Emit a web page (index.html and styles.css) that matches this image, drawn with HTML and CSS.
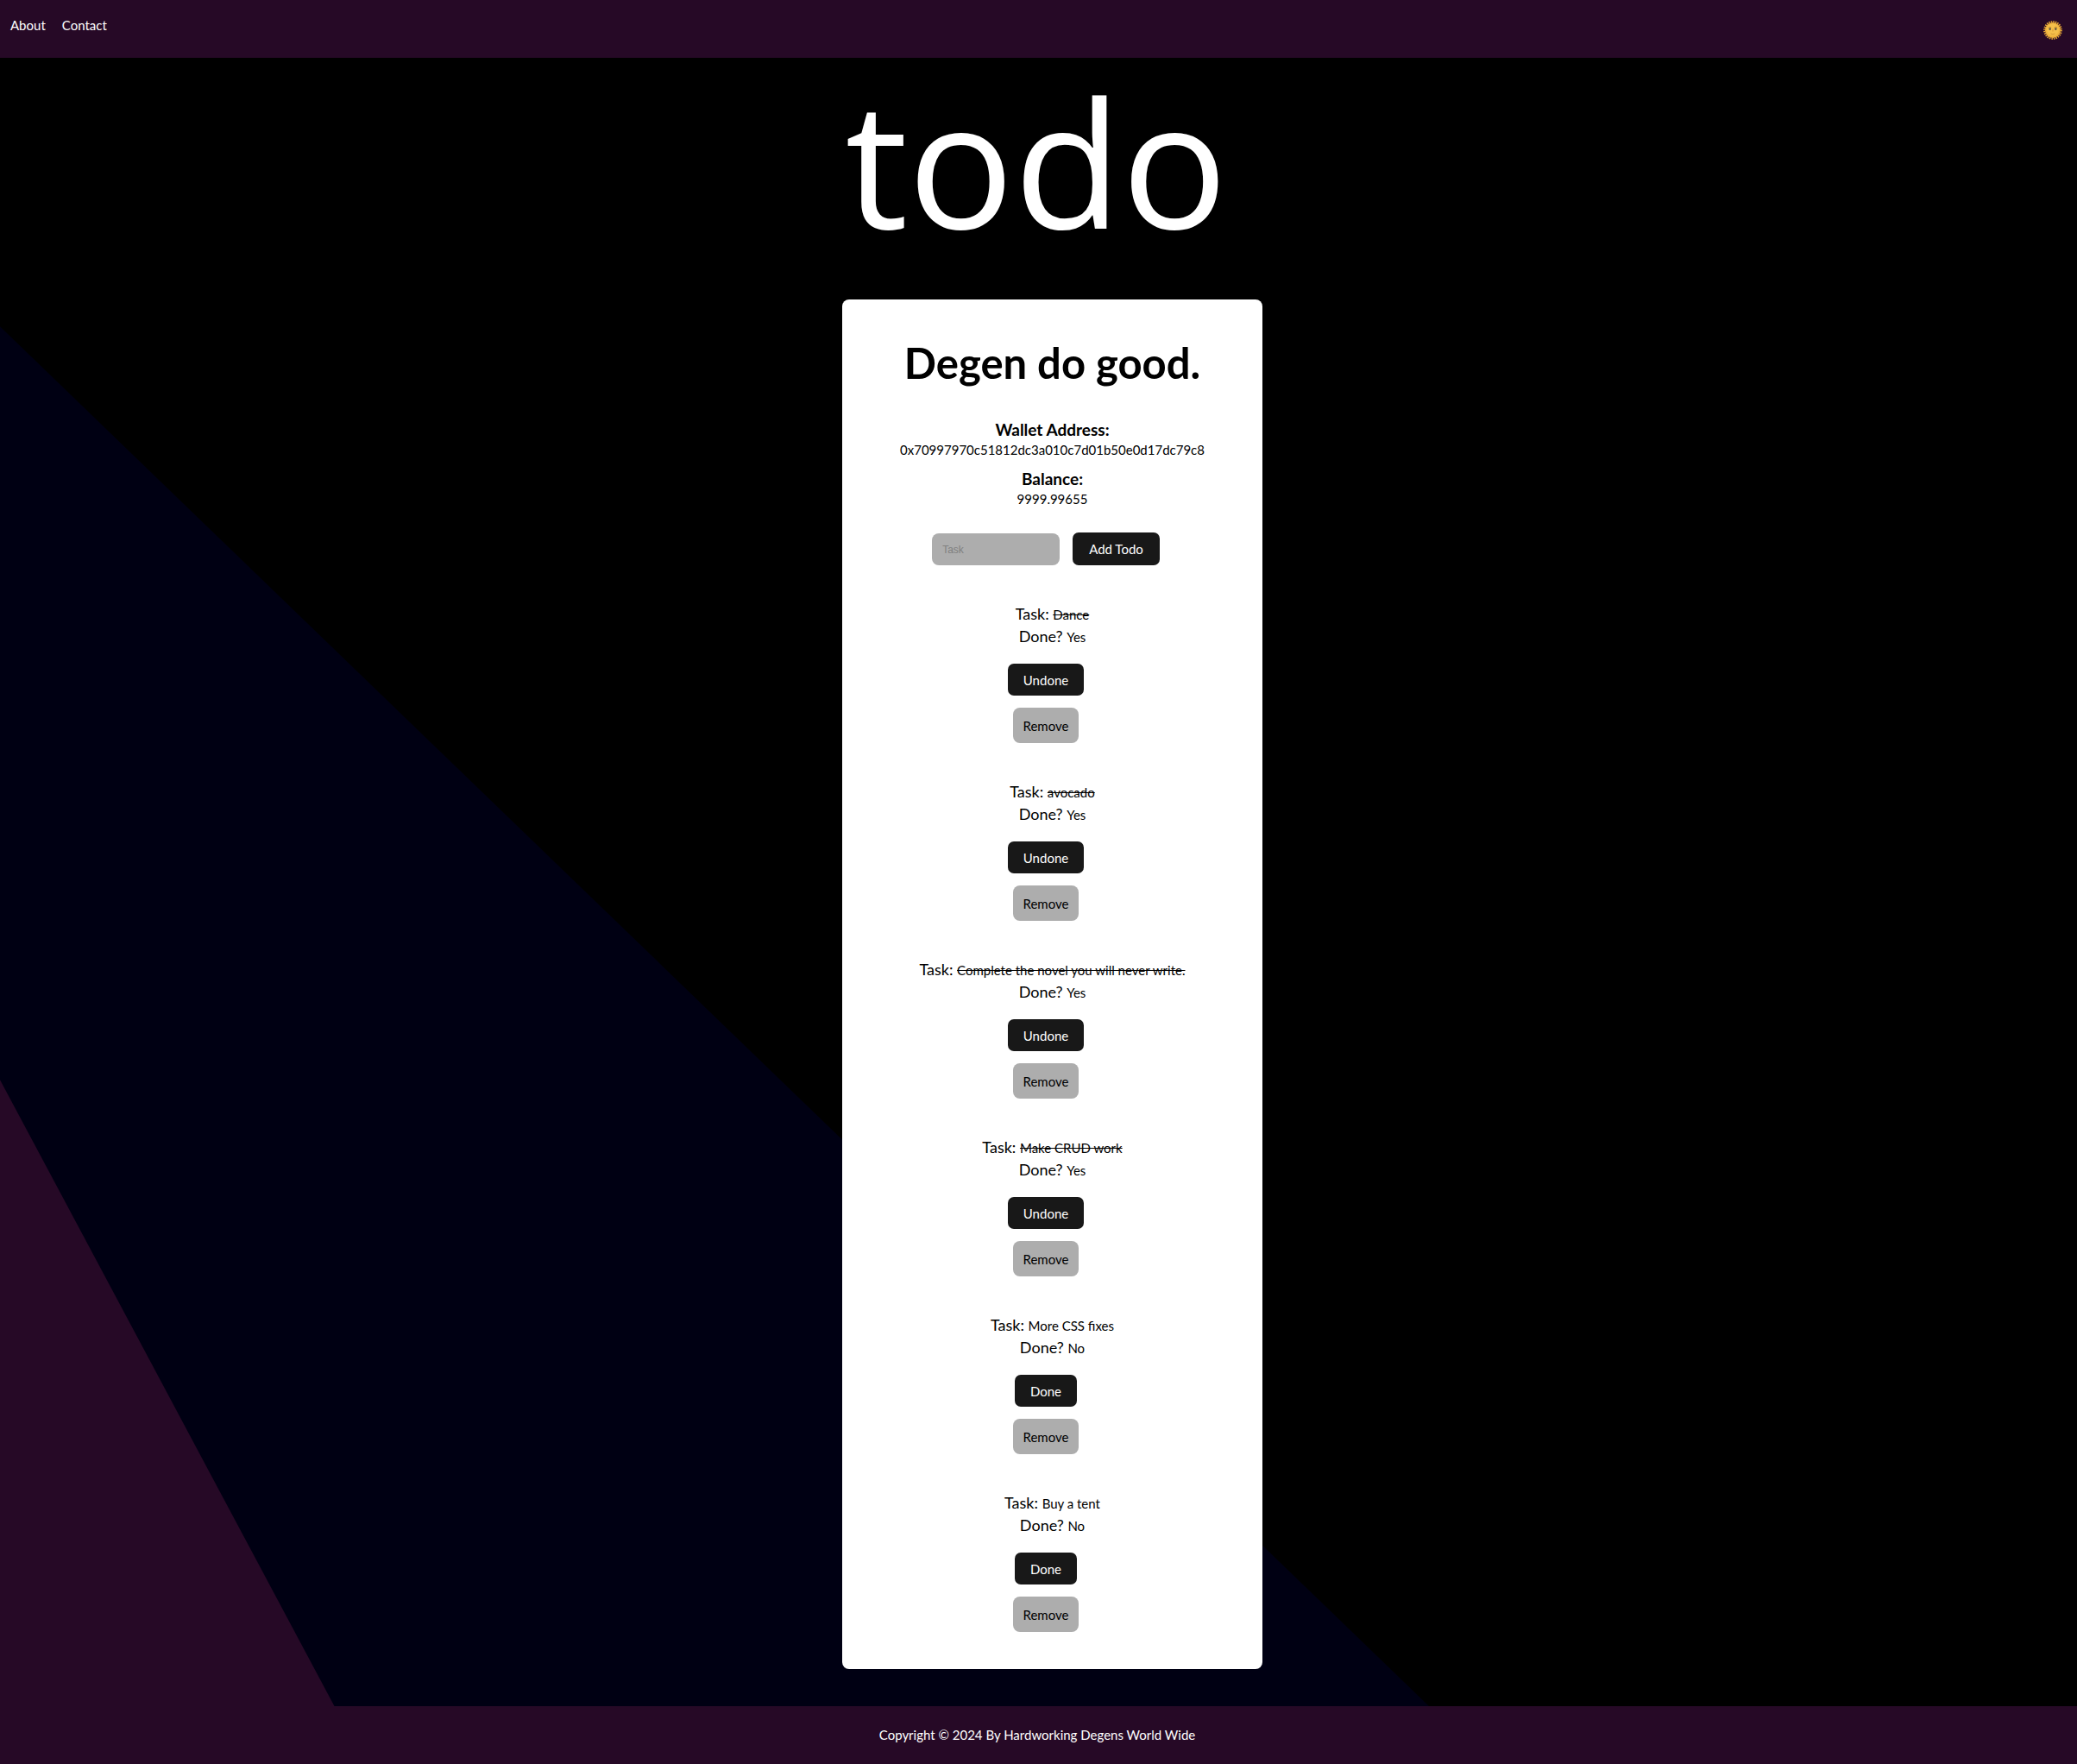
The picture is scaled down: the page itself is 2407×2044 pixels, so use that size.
FILE: index.html
```
<!DOCTYPE html>
<html lang="en">
<head>
<meta charset="utf-8">
<meta name="viewport" content="width=device-width, initial-scale=1">
<title>todo</title>
<link rel="stylesheet" href="styles.css">
</head>
<body>
<header class="bar nav">
  <nav class="links" aria-label="Main">
    <a href="#about">About</a>
    <a href="#contact">Contact</a>
  </nav>
  <button class="theme" type="button" aria-label="Toggle theme">
    <svg viewBox="0 0 24 24" width="24" height="24" aria-hidden="true">
      <circle cx="12" cy="12" r="9.800" fill="none" stroke="#e0a236" stroke-width="2.200" stroke-dasharray="1.500 1.066"/>
      <circle cx="12" cy="12" r="9" fill="#efb23c"/>
      <circle cx="12" cy="11.500" r="7" fill="#f4c04b"/>
      <path d="M6.800 9q1.700-1.500 3.400 0M13.800 9q1.700-1.500 3.400 0" fill="none" stroke="#c98a25" stroke-width="1"/>
      <circle cx="8.700" cy="10.600" r="1.300" fill="#5b5140"/>
      <circle cx="15.300" cy="10.600" r="1.300" fill="#5b5140"/>
      <path d="M12 10.500v3M9.500 16q2.500 1.500 5 0" fill="none" stroke="#d89a35" stroke-width="1"/>
    </svg>
  </button>
</header>
<main class="page">
  <h1 class="logo">todo</h1>
  <section class="card">
    <h2 class="title">Degen do good.</h2>
    <dl class="wallet">
      <div><dt>Wallet Address:</dt><dd>0x70997970c51812dc3a010c7d01b50e0d17dc79c8</dd></div>
      <div><dt>Balance:</dt><dd>9999.99655</dd></div>
    </dl>
    <form class="add">
      <input class="field" type="text" placeholder="Task" aria-label="Task">
      <button class="btn" type="button">Add Todo</button>
    </form>
    <ul class="todos">
      <li class="todo">
        <p>Task: <s>Dance</s></p>
        <p>Done? <span>Yes</span></p>
        <div class="actions"><button class="btn" type="button">Undone</button><button class="btn remove" type="button">Remove</button></div>
      </li>
      <li class="todo">
        <p>Task: <s>avocado</s></p>
        <p>Done? <span>Yes</span></p>
        <div class="actions"><button class="btn" type="button">Undone</button><button class="btn remove" type="button">Remove</button></div>
      </li>
      <li class="todo">
        <p>Task: <s>Complete the novel you will never write.</s></p>
        <p>Done? <span>Yes</span></p>
        <div class="actions"><button class="btn" type="button">Undone</button><button class="btn remove" type="button">Remove</button></div>
      </li>
      <li class="todo">
        <p>Task: <s>Make CRUD work</s></p>
        <p>Done? <span>Yes</span></p>
        <div class="actions"><button class="btn" type="button">Undone</button><button class="btn remove" type="button">Remove</button></div>
      </li>
      <li class="todo">
        <p>Task: <span>More CSS fixes</span></p>
        <p>Done? <span>No</span></p>
        <div class="actions"><button class="btn" type="button">Done</button><button class="btn remove" type="button">Remove</button></div>
      </li>
      <li class="todo">
        <p>Task: <span>Buy a tent</span></p>
        <p>Done? <span>No</span></p>
        <div class="actions"><button class="btn" type="button">Done</button><button class="btn remove" type="button">Remove</button></div>
      </li>
    </ul>
  </section>
</main>
<footer class="bar footer"><p>Copyright © 2024 By Hardworking Degens World Wide</p></footer>
</body>
</html>
```
FILE: styles.css
```
* { box-sizing: border-box; }

body {
  display: flex;
  flex-direction: column;
  min-height: 100vh;
  margin: 0;
  background: #000;
  color: #000;
  font: 15px/22px Lato, "Open Sans", sans-serif;
}

h1, h2, p, dl, dd, ul { margin: 0; padding: 0; }
button, input { border: 0; font: inherit; }

.bar {
  display: flex;
  min-height: 67px;
  background: #260926;
  color: #fff;
}

.nav {
  justify-content: space-between;
  align-items: flex-start;
  padding: 18px 16px 0 12px;
}
.links { display: flex; gap: 19px; }
.links a { color: inherit; text-decoration: none; }
.theme { padding: 5px 0 0; background: none; cursor: pointer; }
.theme svg { display: block; }

.page {
  position: relative;
  isolation: isolate;
  display: flex;
  flex: 1;
  flex-direction: column;
  align-items: center;
  padding-bottom: 43px;
}

/* diagonal colour bands behind the content */
.page::before,
.page::after {
  content: "";
  position: absolute;
  inset: 0;
  z-index: -1;
}
.page::before {
  background: #000013;
  clip-path: polygon(0 16.3%, 68.8% 100%, 0 100%);
}
.page::after {
  background: #260926;
  clip-path: polygon(0 62%, 16.1% 100%, 0 100%);
}

.logo {
  margin-right: 5px;
  padding: 7px 0 49px;
  color: #fff;
  font: 400 204px/224px "Open Sans", "Noto Sans", sans-serif;
}

.card {
  width: 487px;
  max-width: 100%;
  margin-left: 32px;
  padding: 43px 16px;
  border-radius: 8px;
  background: #fff;
  text-align: center;
}
.title { margin-bottom: 36px; font-size: 49px; line-height: 60px; }

.wallet { display: grid; gap: 11px; }
.wallet dt { font-size: 19px; font-weight: 700; line-height: 24px; }

.add {
  display: flex;
  justify-content: center;
  align-items: flex-end;
  gap: 15px;
  margin: 28px 15px 43px 0;
}
.field {
  width: 148px;
  height: 37px;
  padding: 0 12px;
  border-radius: 8px;
  background: #adadad;
  font: 12px "Liberation Sans", sans-serif;
}
.field::placeholder { color: #808080; }

.btn {
  height: 37px;
  padding: 0 18px;
  border-radius: 7px;
  background: #181818;
  color: #fff;
  cursor: pointer;
}
.add .btn { height: 38px; padding: 0 19px; }
.remove {
  height: 41px;
  padding: 0 12px;
  border-radius: 8px;
  background: #adadad;
  color: #000;
}

.todos { display: grid; gap: 43px; list-style: none; }
.todo p { font-size: 18px; line-height: 26px; }
.todo s, .todo span { font-size: 15px; line-height: 20px; }
.actions {
  display: flex;
  flex-direction: column;
  align-items: center;
  gap: 14px;
  margin: 19px 15px 0 0;
}

.footer {
  justify-content: center;
  padding: 22px 3px 0 0;
}
```
